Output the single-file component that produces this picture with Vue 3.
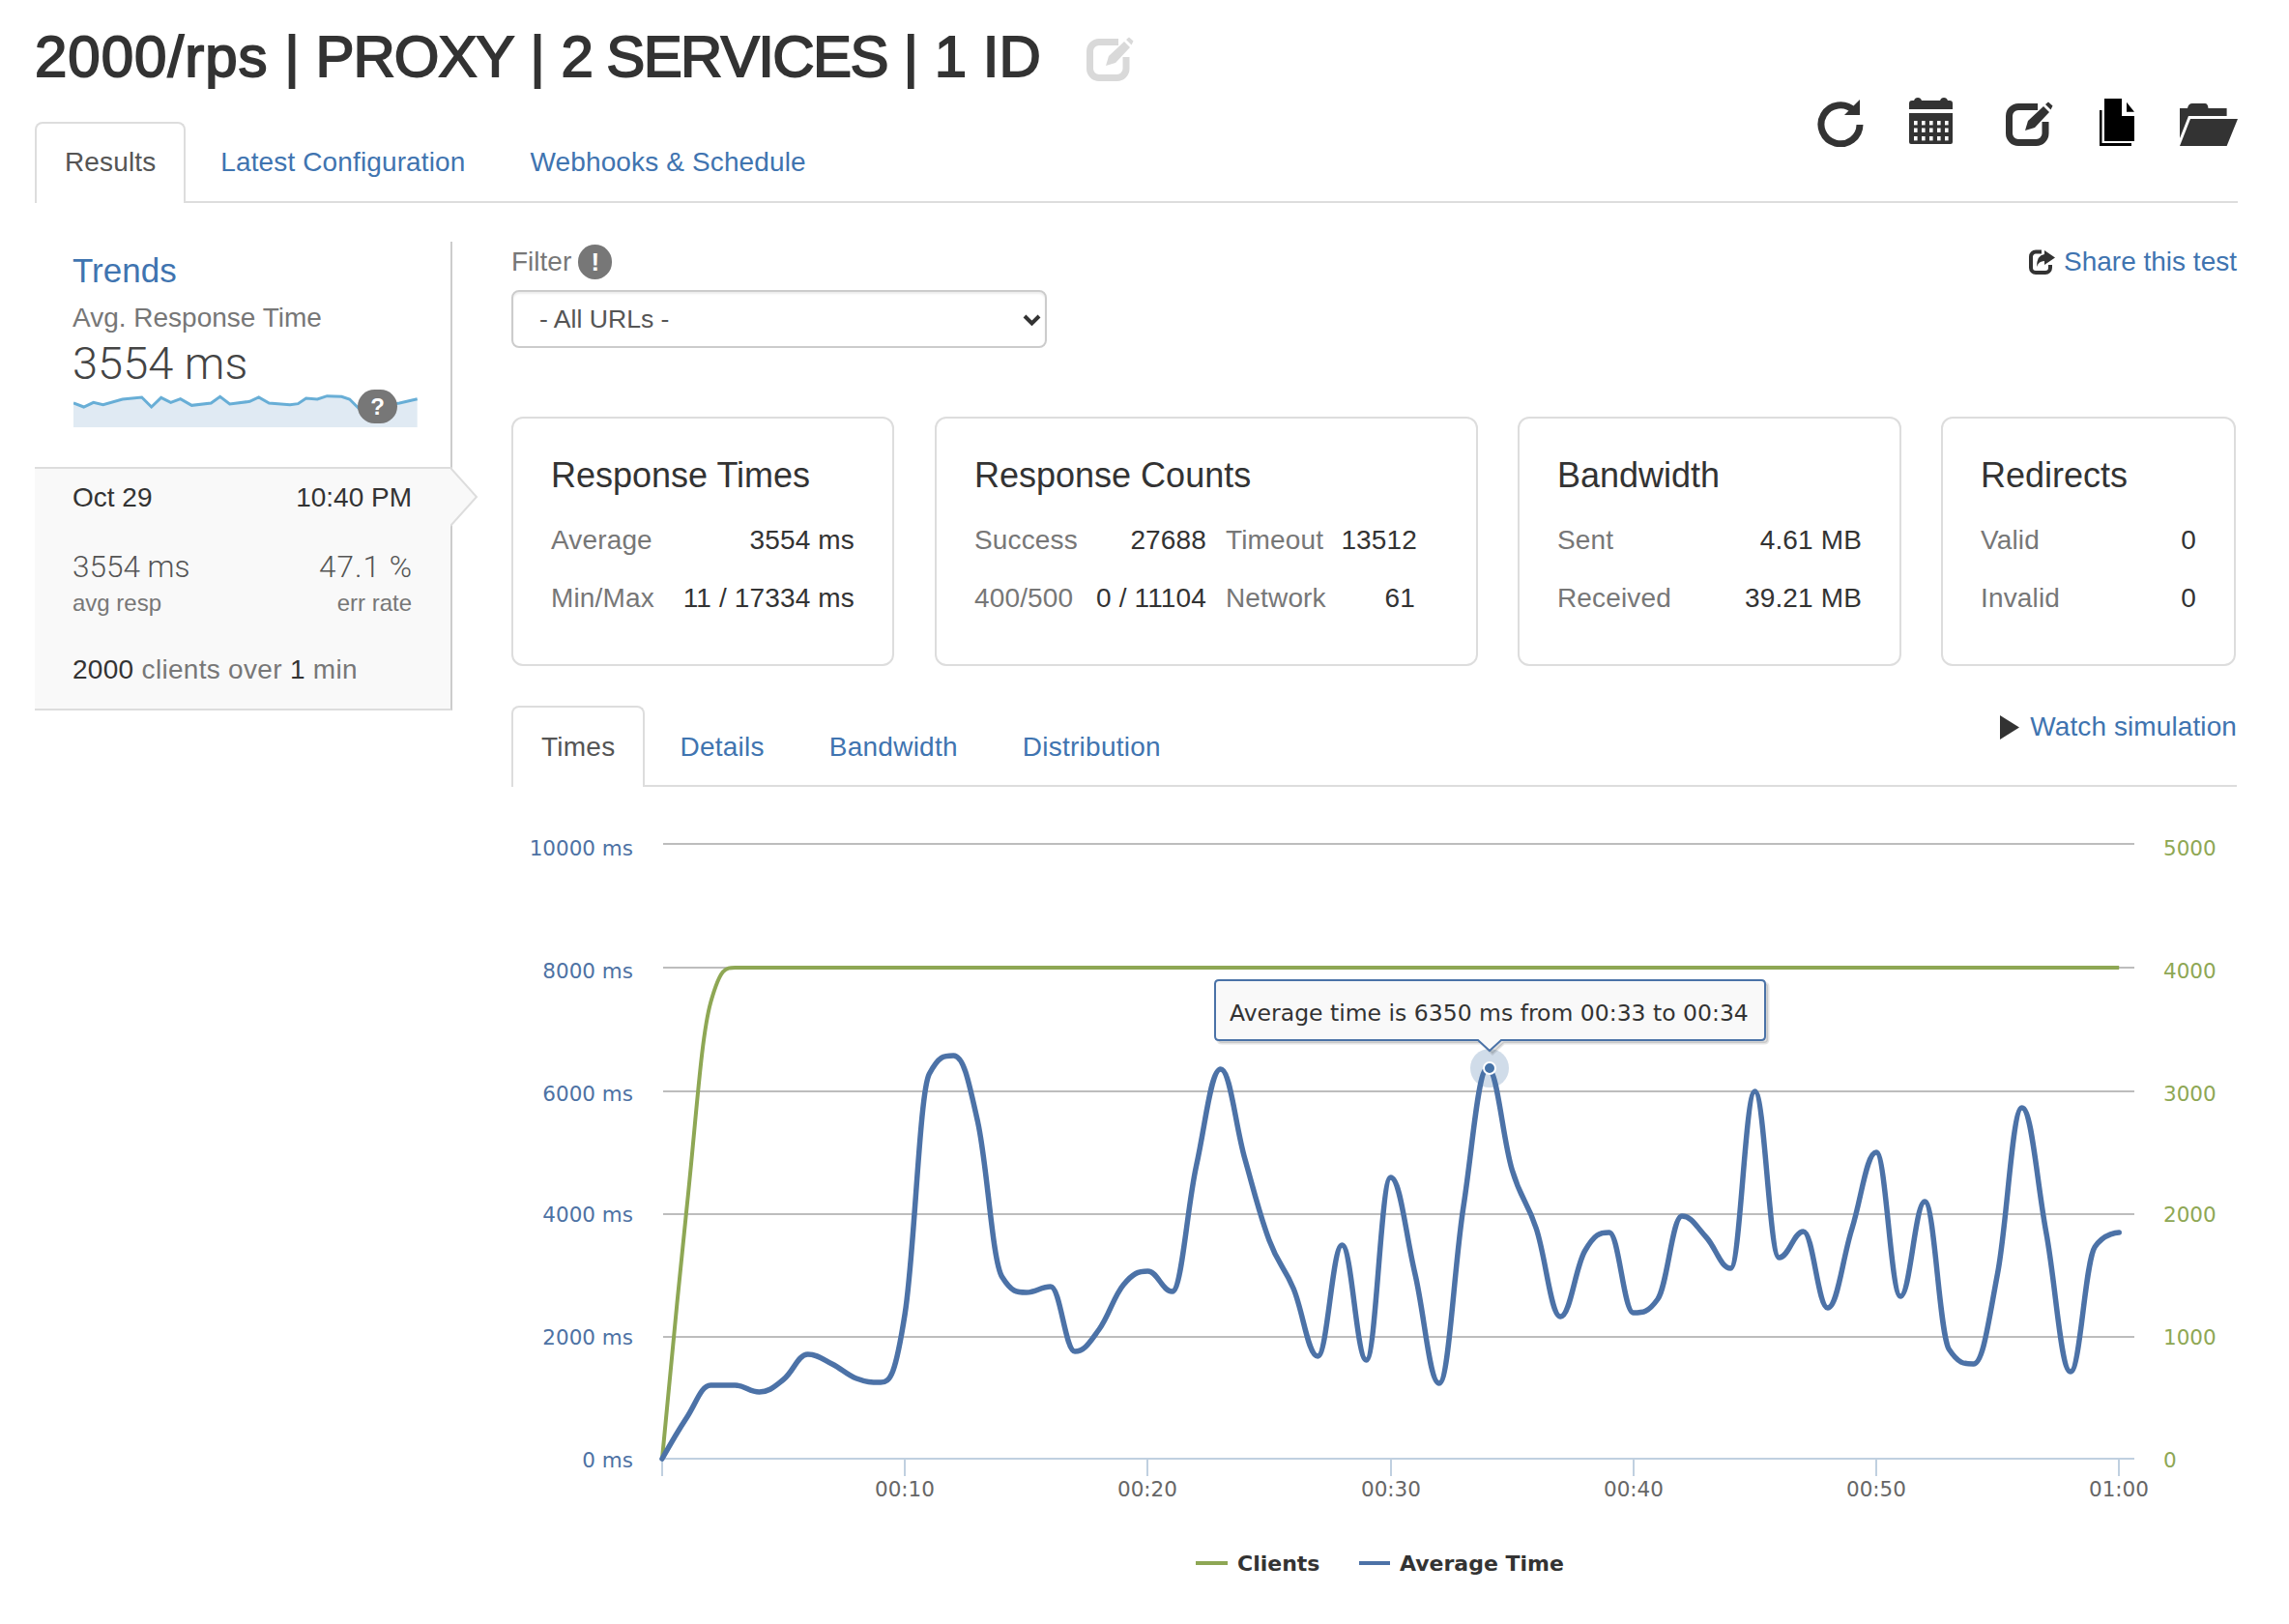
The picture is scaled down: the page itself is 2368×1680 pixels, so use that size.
<script setup>
const avg = [1509,1467,1433,1433,1440,1427,1401,1411,1426,1430,1359,1111,1092,1161,1321,1337,1331,1398,1375,1329,1315,1336,1206,1106,1199,1283,1333,1403,1288,1407,1218,1317,1431,1248,1105,1210,1271,1362,1294,1275,1358,1344,1258,1280,1312,1129,1301,1274,1353,1271,1192,1341,1243,1396,1411,1317,1146,1275,1419,1290,1275]
const clients = avg.map((_, i) => (i === 0 ? 1509 : i === 1 ? 1253 : i === 2 ? 1037 : 1001))
const X = (t) => 685 + 25.12 * t

function spline(ys) {
  const pts = ys.map((y, i) => [X(i), y])
  const ctrl = pts.map((p, i) => {
    if (i === 0 || i === pts.length - 1) return { l: p, r: p }
    const [x, y] = p
    const [lx, ly] = pts[i - 1]
    const [nx, ny] = pts[i + 1]
    const lcx = (1.5 * x + lx) / 2.5
    let lcy = (1.5 * y + ly) / 2.5
    const rcx = (1.5 * x + nx) / 2.5
    let rcy = (1.5 * y + ny) / 2.5
    const c = ((rcy - lcy) * (rcx - x)) / (rcx - lcx) + y - rcy
    lcy += c
    rcy += c
    if (lcy > ly && lcy > y) { lcy = Math.max(ly, y); rcy = 2 * y - lcy }
    else if (lcy < ly && lcy < y) { lcy = Math.min(ly, y); rcy = 2 * y - lcy }
    if (rcy > ny && rcy > y) { rcy = Math.max(ny, y); lcy = 2 * y - rcy }
    else if (rcy < ny && rcy < y) { rcy = Math.min(ny, y); lcy = 2 * y - rcy }
    return { l: [lcx, lcy], r: [rcx, rcy] }
  })
  let d = `M${pts[0][0]} ${pts[0][1]}`
  for (let i = 1; i < pts.length; i++) {
    const a = ctrl[i - 1].r
    const b = ctrl[i].l
    d += ` C${a[0].toFixed(1)} ${a[1].toFixed(1)} ${b[0].toFixed(1)} ${b[1].toFixed(1)} ${pts[i][0].toFixed(1)} ${pts[i][1]}`
  }
  return d
}
const avgPath = spline(avg)
const clientPath = spline(clients)

const grid = [
  { y: 873, base: 885, left: '10000 ms', right: '5000' },
  { y: 1001, base: 1012, left: '8000 ms', right: '4000' },
  { y: 1129, base: 1139, left: '6000 ms', right: '3000' },
  { y: 1256, base: 1264, left: '4000 ms', right: '2000' },
  { y: 1383, base: 1391, left: '2000 ms', right: '1000' },
  { y: 1509, base: 1518, left: '0 ms', right: '0' },
]
const ticks = [
  { x: 685, label: '' },
  { x: 936, label: '00:10' },
  { x: 1187, label: '00:20' },
  { x: 1439, label: '00:30' },
  { x: 1690, label: '00:40' },
  { x: 1941, label: '00:50' },
  { x: 2192, label: '01:00' },
]
const calCols = [5, 13, 21, 29, 37]
const calRows = [24, 31.5, 40]
const sparkPts = '228,560 260,572 290,558 320,565 380,548 440,542 470,572 500,543 530,558 560,547 595,567 655,560 683,540 713,563 775,555 803,542 835,560 900,565 925,562 950,545 985,548 1015,538 1060,540 1085,548 1115,578 1240,560 1295,547'
const tipPath = 'M1261 1014 H1822 Q1826 1014 1826 1018 V1072 Q1826 1076 1822 1076 H1553 L1541 1087 L1529 1076 H1261 Q1257 1076 1257 1072 V1018 Q1257 1014 1261 1014 Z'
</script>

<template>
  <div class="page">
    <svg class="defs" width="0" height="0">
      <symbol id="edit-icon" viewBox="0 0 49 46">
        <path d="M33 5.5 H13 A9.5 9.5 0 0 0 3.5 15 V33 A9.5 9.5 0 0 0 13 42.5 H31.5 A9.5 9.5 0 0 0 41 33 V21" fill="none" stroke="currentColor" stroke-width="7" />
        <polygon points="20,30 23,20 39,5 45,11 30,27" fill="currentColor" />
        <polygon points="41,3 44,0.5 48.5,4.5 46.5,8.5" fill="currentColor" />
      </symbol>
    </svg>

    <div class="title-row">
      <h1 class="title"><span class="t-rps">2000/rps</span> | <span class="t-proxy">PROXY</span> | <span class="t-serv">2 SERVICES</span> | 1 ID</h1>
      <svg class="title-edit" width="49" height="46"><use href="#edit-icon" /></svg>
    </div>

    <div class="tabs top-tabs">
      <a class="tab active">Results</a>
      <a class="tab">Latest Configuration</a>
      <a class="tab">Webhooks &amp; Schedule</a>
      <div class="toolbar">
        <svg class="tool tool-refresh" width="48" height="50" viewBox="0 0 48 50">
          <path d="M38 12.5 A20 20 0 1 0 44 27" fill="none" stroke="#333" stroke-width="7" />
          <polygon points="44,1 44,17 28,17" fill="#333" />
        </svg>
        <svg class="tool tool-cal" width="45" height="48" viewBox="0 0 45 48">
          <path d="M0 6 Q0 3 3 3 H5 Q6 0 9 0 Q12 0 13 3 H32 Q33 0 36 0 Q39 0 40 3 H42 Q45 3 45 6 V12 H0 Z" fill="#333" />
          <path d="M0 16 H45 V46 Q45 48 43 48 H2 Q0 48 0 46 Z" fill="#333" />
          <template v-for="r in calRows" :key="r">
            <rect v-for="c in calCols" :key="c" :x="c" :y="r" width="3.6" height="4.4" fill="#fff" />
          </template>
        </svg>
        <svg class="tool tool-edit" width="49" height="46"><use href="#edit-icon" /></svg>
        <svg class="tool tool-files" width="36" height="49" viewBox="0 0 36 49">
          <path d="M5 0 H23 V18 H36 V44 H5 Z" fill="#000" />
          <polygon points="28,3.7 36,13.7 28,13.7" fill="#000" />
          <path d="M0 12 H2.5 V46 H33 V49 H0 Z" fill="#000" />
        </svg>
        <svg class="tool tool-folder" width="60" height="44" viewBox="0 0 60 44">
          <path d="M0 5 H8 Q9 0 13 0 H26 Q29 0 29.5 5 H48.6 V13 H9 L0 36 Z" fill="#333" />
          <polygon points="11,16 60,16 48.6,44 0,44" fill="#333" />
        </svg>
      </div>
    </div>

    <div class="main">
      <aside class="sidebar">
        <div class="trends">
          <a class="trends-title">Trends</a>
          <div class="trends-label">Avg. Response Time</div>
          <div class="trends-value">3554 ms</div>
          <div class="spark">
            <svg width="356" height="35" viewBox="228 530 1068 105" preserveAspectRatio="none">
              <polygon :points="sparkPts + ' 1295,635 228,635'" fill="#e0eaf3" />
              <polyline :points="sparkPts" fill="none" stroke="#68aed6" stroke-width="9" />
            </svg>
            <span class="badge spark-badge">?</span>
          </div>
        </div>
        <div class="selected">
          <svg class="sel-arrow" width="30" height="62" viewBox="0 0 30 62">
            <polygon points="0,1 27,31 0,61" fill="#f9f9f9" />
            <polyline points="0,1 27,31 0,61" fill="none" stroke="#ddd" stroke-width="2" />
          </svg>
          <div class="sel-row sel-date"><span>Oct 29</span><span>10:40 PM</span></div>
          <div class="sel-row sel-num"><span>3554 ms</span><span class="err">47.1 %</span></div>
          <div class="sel-row sel-cap"><span>avg resp</span><span>err rate</span></div>
          <div class="sel-foot"><b>2000</b> clients over <b>1</b> min</div>
        </div>
      </aside>

      <section class="content">
        <div class="filter-row">
          <div class="filter-label">Filter <span class="badge filter-badge">!</span></div>
          <a class="share">
            <svg class="share-icon" width="27" height="26" viewBox="0 0 27 26">
              <path d="M13 2.5 H7 A5 5 0 0 0 2 7.5 V19 A5 5 0 0 0 7 24 H17 A5 5 0 0 0 22 19 V16" fill="none" stroke="#333" stroke-width="4" />
              <path d="M16 1 L27 8.5 L16 16 V12 Q10 12 8 18 Q8 6 16 5 Z" fill="#333" />
            </svg>
            <span>Share this test</span>
          </a>
        </div>
        <div class="select-wrap">
          <select class="url-select">
            <option>- All URLs -</option>
          </select>
          <svg class="chevron" width="19" height="12" viewBox="0 0 19 12">
            <polyline points="2,2 9.5,9.5 17,2" fill="none" stroke="#333" stroke-width="4" />
          </svg>
        </div>

        <div class="cards">
          <div class="card card-times">
            <h3>Response Times</h3>
            <div class="stat"><span class="k">Average</span><span class="v">3554 ms</span></div>
            <div class="stat"><span class="k">Min/Max</span><span class="v">11 / 17334 ms</span></div>
          </div>
          <div class="card card-counts">
            <h3>Response Counts</h3>
            <div class="counts-grid">
              <div class="stat"><span class="k">Success</span><span class="v">27688</span></div>
              <div class="stat"><span class="k">Timeout</span><span class="v">13512</span></div>
              <div class="stat"><span class="k">400/500</span><span class="v">0 / 11104</span></div>
              <div class="stat"><span class="k">Network</span><span class="v net">61</span></div>
            </div>
          </div>
          <div class="card card-band">
            <h3>Bandwidth</h3>
            <div class="stat"><span class="k">Sent</span><span class="v">4.61 MB</span></div>
            <div class="stat"><span class="k">Received</span><span class="v">39.21 MB</span></div>
          </div>
          <div class="card card-redir">
            <h3>Redirects</h3>
            <div class="stat"><span class="k">Valid</span><span class="v">0</span></div>
            <div class="stat"><span class="k">Invalid</span><span class="v">0</span></div>
          </div>
        </div>

        <div class="tabs chart-tabs">
          <a class="tab active">Times</a>
          <a class="tab">Details</a>
          <a class="tab">Bandwidth</a>
          <a class="tab">Distribution</a>
          <a class="watch">
            <svg width="20" height="25" viewBox="0 0 20 25"><polygon points="0,0 20,12.5 0,25" fill="#333" /></svg>
            <span>Watch simulation</span>
          </a>
        </div>

        <svg class="chart" width="1785" height="866" viewBox="529 814 1785 866">
          <g v-for="g in grid" :key="g.y">
            <line x1="686" x2="2208" :y1="g.y" :y2="g.y" :stroke="g.y === 1509 ? '#c0d0e0' : '#bdbdbd'" stroke-width="2" />
            <text class="lab-left" x="655" :y="g.base" text-anchor="end">{{ g.left }}</text>
            <text class="lab-right" x="2238" :y="g.base">{{ g.right }}</text>
          </g>
          <g v-for="t in ticks" :key="t.x">
            <line :x1="t.x" :x2="t.x" y1="1509" y2="1527" stroke="#c0d0e0" stroke-width="2" />
            <text class="lab-x" :x="t.x" y="1548" text-anchor="middle">{{ t.label }}</text>
          </g>
          <path :d="clientPath" fill="none" stroke="#8ea754" stroke-width="4" />
          <path :d="avgPath" fill="none" stroke="#4c72a7" stroke-width="5.5" stroke-linejoin="round" stroke-linecap="round" />
          <circle cx="1541" cy="1105" r="20" fill="#4572a7" fill-opacity="0.25" />
          <circle cx="1541" cy="1105" r="6" fill="#4572a7" stroke="#fff" stroke-width="2" />
          <path :d="tipPath" transform="translate(3 3)" fill="#000" fill-opacity="0.12" stroke="#000" stroke-opacity="0.1" stroke-width="3" />
          <path :d="tipPath" fill="#f9f9f9" stroke="#4a72a7" stroke-width="2" />
          <text class="lab-tip" x="1272" y="1056">Average time is 6350 ms from 00:33 to 00:34</text>
          <line x1="1237" x2="1270" y1="1617" y2="1617" stroke="#8ea754" stroke-width="4" />
          <text class="lab-legend" x="1280" y="1625">Clients</text>
          <line x1="1406" x2="1438" y1="1617" y2="1617" stroke="#4c72a7" stroke-width="4" />
          <text class="lab-legend" x="1448" y="1625">Average Time</text>
        </svg>
      </section>
    </div>
  </div>
</template>

<style>
html, body { margin: 0; background: #fff; }
</style>

<style scoped>
.page {
  box-sizing: border-box;
  width: 2368px;
  height: 1680px;
  overflow: hidden;
  padding: 0 53px 0 36px;
  font-family: "Liberation Sans", Arial, sans-serif;
  font-size: 28px;
  line-height: 40px;
  color: #333;
}
.defs { position: absolute; }
.title-row { display: flex; align-items: flex-start; padding-top: 26px; height: 66px; }
.title {
  margin: 0;
  font-size: 60px;
  line-height: 66px;
  font-weight: 400;
  font-kerning: none;
  -webkit-text-stroke: 1.8px #333;
  white-space: nowrap;
}
.t-rps { letter-spacing: 1px; }
.t-proxy { letter-spacing: -1px; }
.t-serv { letter-spacing: -1.6px; }
.title-edit { color: #d9d9d9; margin: 12px 0 0 47px; }
.tabs { display: flex; border-bottom: 2px solid #ddd; box-sizing: border-box; }
.top-tabs { margin-top: 34px; height: 84px; }
.tab {
  box-sizing: border-box;
  height: 84px;
  padding: 20px 29px 0;
  margin-right: 5px;
  border: 2px solid transparent;
  border-bottom: 0;
  color: #3f74b0;
  letter-spacing: 0.13px;
  white-space: nowrap;
}
.tab.active { color: #555; background: #fff; border-color: #ddd; border-radius: 8px 8px 0 0; }
.toolbar { margin-left: auto; display: flex; align-items: flex-start; margin-top: -25px; }
.tool { flex: none; }
.tool-refresh { margin: 1px 0 0 0; }
.tool-cal { margin-left: 47px; }
.tool-edit { margin: 4px 0 0 55px; }
.tool-files { margin: 1px 0 0 48px; }
.tool-folder { margin: 6px 0 0 47px; }
.main { display: flex; margin-top: 40px; }
.sidebar { flex: none; width: 432px; }
.trends {
  box-sizing: border-box;
  height: 233px;
  padding: 10px 0 0 39px;
  border-right: 2px solid #ccc;
}
.trends-title { display: block; font-size: 35px; color: #3f74b0; }
.trends-label { margin-top: 9px; color: #777; }
.trends-value {
  font-family: Roboto, "Liberation Sans", sans-serif;
  font-weight: 300;
  font-size: 47px;
  line-height: 56px;
  margin-top: -1px;
  color: #444;
}
.spark { position: relative; width: 356px; height: 35px; margin-top: 3px; margin-left: 1px; }
.spark svg { display: block; }
.badge {
  display: flex;
  align-items: center;
  justify-content: center;
  background: #777;
  color: #fff;
  font-weight: 700;
  border-radius: 18px;
}
.spark-badge {
  position: absolute;
  left: 294px;
  top: -4px;
  width: 41px;
  height: 35px;
  font-size: 24px;
}
.selected {
  position: relative;
  box-sizing: border-box;
  height: 252px;
  background: #f9f9f9;
  border-top: 2px solid #ddd;
  border-bottom: 2px solid #ddd;
  border-right: 2px solid #ccc;
  padding: 10px 40px 0 39px;
}
.sel-arrow { position: absolute; left: 430px; top: -2px; }
.sel-row { display: flex; justify-content: space-between; }
.sel-date { color: #333; }
.sel-num {
  margin-top: 32px;
  font-family: Roboto, "Liberation Sans", sans-serif;
  font-weight: 300;
  font-size: 31.5px;
  color: #555;
}
.err { letter-spacing: 1px; margin-right: -1px; }
.sel-cap { font-size: 24px; line-height: 30px; color: #777; margin-top: 2px; }
.sel-foot { margin-top: 34px; color: #777; letter-spacing: 0.3px; }
.sel-foot b { font-weight: 400; color: #333; }
.content { flex: none; width: 1785px; margin-left: 61px; }
.filter-row { display: flex; justify-content: space-between; margin-top: 1px; height: 40px; color: #777; }
.filter-label { display: flex; align-items: center; gap: 7px; }
.filter-badge { width: 35px; height: 36px; font-size: 26px; }
.share { display: flex; align-items: center; color: #3f74b0; white-space: nowrap; }
.share-icon { margin-right: 9px; }
.select-wrap { position: relative; width: 554px; margin-top: 9px; }
.url-select {
  display: block;
  box-sizing: border-box;
  width: 554px;
  height: 60px;
  padding: 0 0 0 27px;
  border: 2px solid #ccc;
  border-radius: 8px;
  background-color: #fff;
  box-shadow: inset 0 2px 2px rgba(0, 0, 0, 0.075);
  color: #555;
  font-family: inherit;
  font-size: 26.6px;
  appearance: none;
}
.chevron { position: absolute; right: 6px; top: 25px; pointer-events: none; }
.cards { display: flex; gap: 42px; margin-top: 71px; }
.card {
  box-sizing: border-box;
  height: 258px;
  padding: 37px 39px 0 39px;
  border: 2px solid #ddd;
  border-radius: 12px;
}
.card-times { width: 396px; }
.card-counts { width: 562px; }
.card-band { width: 397px; margin-left: -1px; }
.card-redir { width: 305px; margin-left: -1px; }
.card h3 { margin: 0 0 15px; font-size: 36px; line-height: 44px; font-weight: 400; color: #333; }
.stat { display: flex; justify-content: space-between; line-height: 60px; white-space: nowrap; letter-spacing: 0.15px; }
.k { color: #777; }
.v { color: #333; }
.counts-grid { display: grid; grid-template-columns: 240px 198px; column-gap: 20px; }
.net { margin-right: 2px; }
.chart-tabs { margin-top: 41px; height: 84px; }
.chart-tabs .tab { height: 84px; padding-top: 21px; letter-spacing: 0.25px; }
.watch { margin: 2px 0 0 auto; display: flex; align-items: center; gap: 11px; height: 40px; color: #3f74b0; white-space: nowrap; letter-spacing: 0.1px; }
.chart { display: block; overflow: visible; }
.chart text { font-family: "DejaVu Sans", sans-serif; }
.lab-left { font-size: 21.5px; fill: #4d72a4; }
.lab-right { font-size: 21.5px; fill: #8ea754; }
.lab-x { font-size: 21.5px; fill: #666; }
.lab-tip { font-size: 23.5px; fill: #333; }
.lab-legend { font-size: 22px; font-weight: 700; fill: #333; }
</style>
